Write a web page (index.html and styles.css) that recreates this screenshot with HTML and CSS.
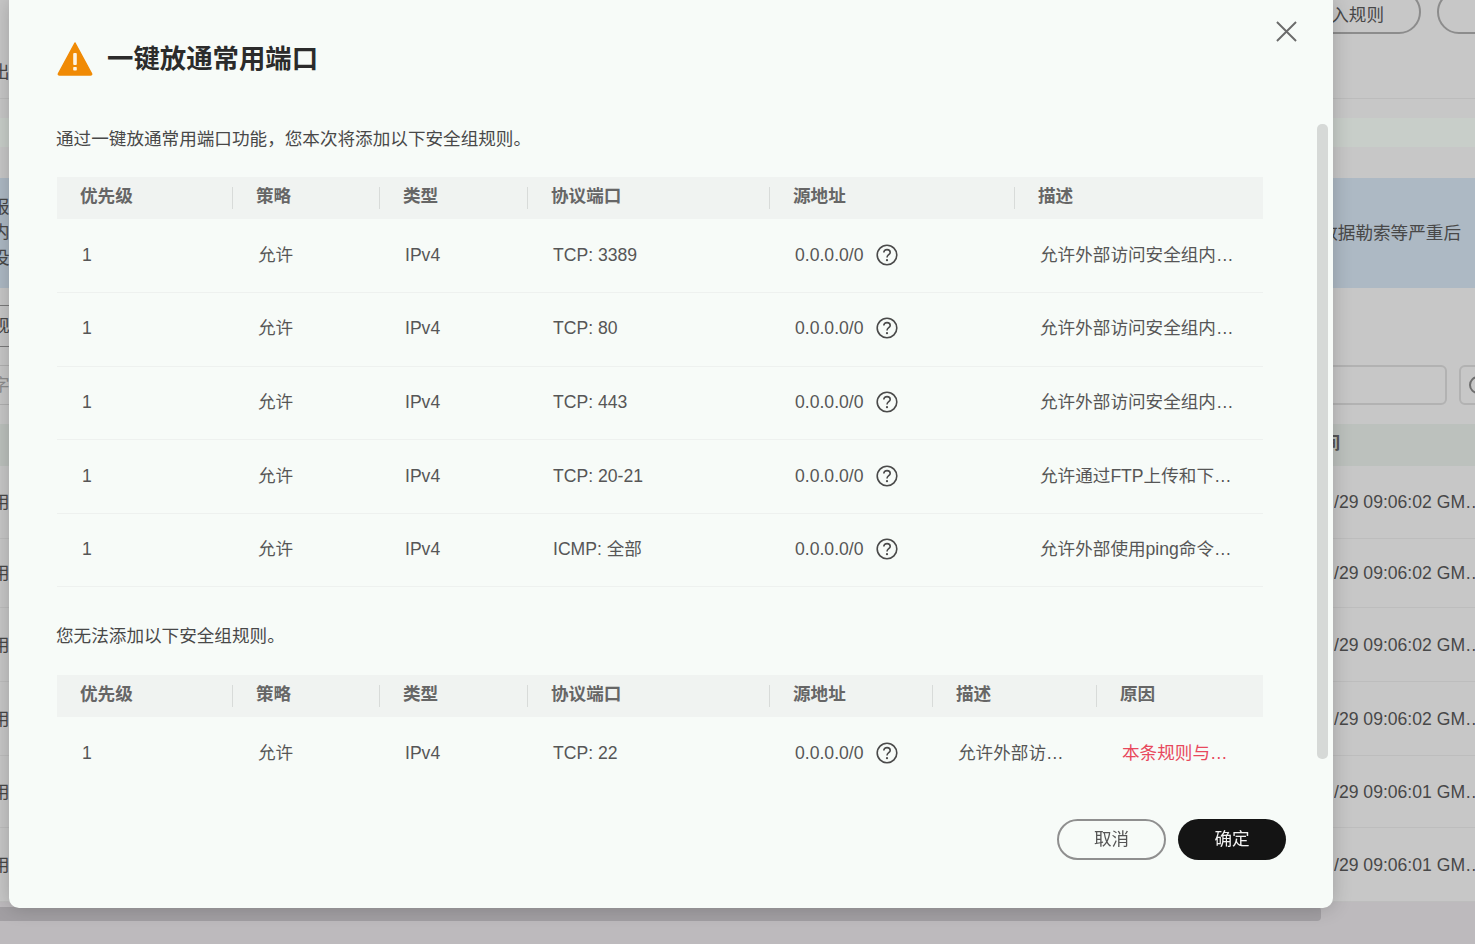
FILE: index.html
```html
<!DOCTYPE html>
<html lang="zh-CN">
<head>
    <meta charset="UTF-8">
    <meta name="viewport" content="width=device-width, initial-scale=1.0">
    <title>一键放通常用端口</title>
    <link rel="stylesheet" href="styles.css">
</head>
<body>
    <!-- Page behind the dialog -->
    <div class="page">
        <div class="toolbar">
            <button class="pill">添加入规则</button>
            <button class="pill pill-next">快速添加</button>
        </div>
        <div class="bg-title"><span class="cut">出</span></div>
        <div class="bg-band"></div>
        <div class="notice">
            <div class="notice-left"><span class="cut">报</span><span class="cut">内</span><span class="cut">没</span></div>
            <div class="notice-right">数据勒索等严重后</div>
        </div>
        <div class="tabs"><span class="tab cut">规</span></div>
        <div class="filters">
            <div class="filter-left"><span class="cut">字</span></div>
            <div class="filter-right">
                <div class="filter-input"></div>
                <div class="filter-btn"><span class="filter-ring"></span></div>
            </div>
        </div>
        <div class="bg-head"><span class="bg-head-text">时间</span></div>
        <div class="bg-row"><span class="cut">用</span><span class="bg-time">/29 09:06:02 GM…</span></div>
        <div class="bg-row"><span class="cut">用</span><span class="bg-time">/29 09:06:02 GM…</span></div>
        <div class="bg-row"><span class="cut">用</span><span class="bg-time">/29 09:06:02 GM…</span></div>
        <div class="bg-row"><span class="cut">用</span><span class="bg-time">/29 09:06:02 GM…</span></div>
        <div class="bg-row"><span class="cut">用</span><span class="bg-time">/29 09:06:01 GM…</span></div>
        <div class="bg-row"><span class="cut">用</span><span class="bg-time">/29 09:06:01 GM…</span></div>
        <div class="hscroll"></div>
    </div>

    <!-- Dialog -->
    <div class="modal">
        <div class="modal-header">
            <svg class="warn-icon" viewBox="0 0 36 34">
                <path d="M18 1 L34.5 31.5 Q35 33 33.5 33 L2.5 33 Q1 33 1.5 31.5 Z" fill="#f08a05" stroke="#f08a05" stroke-width="1.5" stroke-linejoin="round"/>
                <rect x="16.2" y="11" width="3.6" height="12" rx="1" fill="#fdf3e4"/>
                <rect x="16.2" y="25" width="3.6" height="3.6" rx="0.8" fill="#fdf3e4"/>
            </svg>
            <h2>一键放通常用端口</h2>
        </div>
        <button class="close-btn" aria-label="关闭">
            <svg viewBox="0 0 22 22"><path d="M1 1 L21 21 M21 1 L1 21" stroke="#6b6b6b" stroke-width="2" fill="none"/></svg>
        </button>

        <div class="modal-body">
            <p class="intro">通过一键放通常用端口功能，您本次将添加以下安全组规则。</p>
            <table class="rules">
                <colgroup>
                    <col class="c-pri"><col class="c-act"><col class="c-type"><col class="c-port"><col class="c-src"><col class="c-desc">
                </colgroup>
                <thead>
                    <tr><th>优先级</th><th>策略</th><th>类型</th><th>协议端口</th><th>源地址</th><th>描述</th></tr>
                </thead>
                <tbody>
                    <tr>
                        <td>1</td><td>允许</td><td>IPv4</td><td>TCP: 3389</td>
                        <td><span class="src">0.0.0.0/0<svg class="help" viewBox="0 0 22 22"><circle cx="11" cy="11" r="9.8"/><path d="M7.8 8.6 C7.8 6.7 9.2 5.6 11 5.6 C12.9 5.6 14.2 6.8 14.2 8.4 C14.2 10.6 11 10.8 11 13.4"/><circle class="dot" cx="11" cy="16.2" r="1.1"/></svg></span></td>
                        <td>允许外部访问安全组内…</td>
                    </tr>
                    <tr>
                        <td>1</td><td>允许</td><td>IPv4</td><td>TCP: 80</td>
                        <td><span class="src">0.0.0.0/0<svg class="help" viewBox="0 0 22 22"><circle cx="11" cy="11" r="9.8"/><path d="M7.8 8.6 C7.8 6.7 9.2 5.6 11 5.6 C12.9 5.6 14.2 6.8 14.2 8.4 C14.2 10.6 11 10.8 11 13.4"/><circle class="dot" cx="11" cy="16.2" r="1.1"/></svg></span></td>
                        <td>允许外部访问安全组内…</td>
                    </tr>
                    <tr>
                        <td>1</td><td>允许</td><td>IPv4</td><td>TCP: 443</td>
                        <td><span class="src">0.0.0.0/0<svg class="help" viewBox="0 0 22 22"><circle cx="11" cy="11" r="9.8"/><path d="M7.8 8.6 C7.8 6.7 9.2 5.6 11 5.6 C12.9 5.6 14.2 6.8 14.2 8.4 C14.2 10.6 11 10.8 11 13.4"/><circle class="dot" cx="11" cy="16.2" r="1.1"/></svg></span></td>
                        <td>允许外部访问安全组内…</td>
                    </tr>
                    <tr>
                        <td>1</td><td>允许</td><td>IPv4</td><td>TCP: 20-21</td>
                        <td><span class="src">0.0.0.0/0<svg class="help" viewBox="0 0 22 22"><circle cx="11" cy="11" r="9.8"/><path d="M7.8 8.6 C7.8 6.7 9.2 5.6 11 5.6 C12.9 5.6 14.2 6.8 14.2 8.4 C14.2 10.6 11 10.8 11 13.4"/><circle class="dot" cx="11" cy="16.2" r="1.1"/></svg></span></td>
                        <td>允许通过FTP上传和下…</td>
                    </tr>
                    <tr>
                        <td>1</td><td>允许</td><td>IPv4</td><td>ICMP: 全部</td>
                        <td><span class="src">0.0.0.0/0<svg class="help" viewBox="0 0 22 22"><circle cx="11" cy="11" r="9.8"/><path d="M7.8 8.6 C7.8 6.7 9.2 5.6 11 5.6 C12.9 5.6 14.2 6.8 14.2 8.4 C14.2 10.6 11 10.8 11 13.4"/><circle class="dot" cx="11" cy="16.2" r="1.1"/></svg></span></td>
                        <td>允许外部使用ping命令…</td>
                    </tr>
                </tbody>
            </table>

            <p class="intro second">您无法添加以下安全组规则。</p>
            <table class="rules">
                <colgroup>
                    <col class="c-pri"><col class="c-act"><col class="c-type"><col class="c-port"><col class="c-src2"><col class="c-desc2"><col class="c-why">
                </colgroup>
                <thead>
                    <tr><th>优先级</th><th>策略</th><th>类型</th><th>协议端口</th><th>源地址</th><th>描述</th><th>原因</th></tr>
                </thead>
                <tbody>
                    <tr>
                        <td>1</td><td>允许</td><td>IPv4</td><td>TCP: 22</td>
                        <td><span class="src">0.0.0.0/0<svg class="help" viewBox="0 0 22 22"><circle cx="11" cy="11" r="9.8"/><path d="M7.8 8.6 C7.8 6.7 9.2 5.6 11 5.6 C12.9 5.6 14.2 6.8 14.2 8.4 C14.2 10.6 11 10.8 11 13.4"/><circle class="dot" cx="11" cy="16.2" r="1.1"/></svg></span></td>
                        <td>允许外部访…</td>
                        <td class="reason">本条规则与…</td>
                    </tr>
                </tbody>
            </table>
        </div>

        <div class="modal-footer">
            <button class="btn btn-cancel">取消</button>
            <button class="btn btn-ok">确定</button>
        </div>
        <div class="vscroll"></div>
    </div>
</body>
</html>
```

FILE: styles.css
```css
/* General */
html, body {
    margin: 0;
    padding: 0;
    height: 100%;
    overflow: hidden;
}
body {
    font-family: "Liberation Sans", "Noto Sans CJK SC", sans-serif;
    font-size: 17.6px;
    line-height: 24px;
    color: #4f4f4f;
    background-color: #bdbabd;
    filter: blur(0.4px); /* the reference is a soft video frame */
}
button {
    font-family: inherit;
    font-size: inherit;
    line-height: inherit;
    cursor: pointer;
}

/* Page behind the dialog */
.page {
    display: flex;
    flex-direction: column;
    height: 100%;
    overflow: hidden;
    color: #484848;
}
.cut {
    display: block;
    margin-left: -8px;
}
.toolbar {
    height: 34px;
    display: flex;
    justify-content: flex-end;
    align-items: flex-end;
    gap: 16px;
    margin-right: -142px;
    background-color: #c7c7c7;
}
.pill {
    flex: none;
    width: 130px;
    height: 44px;
    border: 2px solid #8c8c8c;
    border-radius: 22px;
    background: none;
    color: #484848;
    padding: 6px 32px 0 0;
    box-sizing: border-box;
    text-align: center;
}
.pill-next {
    width: 180px;
    padding: 6px 0 0 0;
}
.bg-title {
    height: 65px;
    padding-top: 26px;
    box-sizing: border-box;
    background-color: #c7c7c7;
    border-bottom: 1px solid #bcbcbc;
}
.bg-band {
    height: 29px;
    border-top: 19px solid #c7c7c7;
    border-bottom: 31px solid #c7c7c7;
    background-color: #c8cec9;
}
.notice {
    height: 110px;
    display: flex;
    justify-content: space-between;
    align-items: center;
    background-color: #adb9c4;
}
.notice-left {
    line-height: 25.5px;
}
.notice-right {
    padding-right: 14px;
}
.tabs {
    height: 77px;
    padding-top: 17px;
    box-sizing: border-box;
    background-color: #c7c7c7;
}
.tab {
    width: 40px;
    height: 42px;
    line-height: 40px;
    border-top: 1px solid #7a7a7a;
    border-bottom: 1px solid #7a7a7a;
    box-sizing: border-box;
}
.filters {
    height: 59px;
    display: flex;
    justify-content: space-between;
    background-color: #c7c7c7;
}
.filter-left {
    height: 40px;
    width: 40px;
    line-height: 38px;
    color: #8e8e8e;
    border-top: 1px solid #b0b0b0;
    border-bottom: 1px solid #b0b0b0;
    box-sizing: border-box;
}
.filter-right {
    display: flex;
    gap: 12px;
    margin-right: -24px;
}
.filter-input {
    width: 300px;
    height: 40px;
    box-sizing: border-box;
    border: 2px solid #b2b2b2;
    border-radius: 6px;
}
.filter-btn {
    width: 40px;
    height: 40px;
    box-sizing: border-box;
    border: 2px solid #b2b2b2;
    border-radius: 6px;
    padding: 9px 0 0 8px;
}
.filter-ring {
    display: block;
    width: 14px;
    height: 14px;
    border: 2px solid #6e6e6e;
    border-radius: 50%;
}
.bg-head {
    height: 42px;
    line-height: 38px;
    background-color: #bcc1bd;
    padding-left: 1305px;
}
.bg-head-text {
    font-weight: 700;
    color: #555;
}
.bg-row {
    height: 74px;
    display: flex;
    justify-content: space-between;
    align-items: center;
    box-sizing: border-box;
    background-color: #c7c7c7;
    border-bottom: 1px solid #bdbdbd;
}
.bg-row:nth-of-type(8) { height: 73px; }
.bg-row:nth-of-type(9) { height: 69px; }
.bg-row:nth-of-type(12) { height: 72px; }
.bg-time {
    flex: none;
    width: 141px;
    white-space: nowrap;
    overflow: hidden;
}
.hscroll {
    flex: none;
    width: 1321px;
    height: 14px;
    margin-top: 5px;
    background-color: #a29fa3;
    border-radius: 0 4px 4px 0;
}

/* Dialog */
.modal {
    position: fixed;
    left: 9px;
    top: 0;
    width: 1324px;
    height: 908px;
    display: flex;
    flex-direction: column;
    background-color: #f7fbf8;
    border-radius: 0 0 10px 10px;
    box-shadow: 0 0 20px rgba(0, 0, 0, 0.2);
}
.modal-header {
    display: flex;
    align-items: center;
    gap: 14px;
    height: 34px;
    padding: 42px 0 0 48px;
}
.modal-header h2 {
    margin: 0;
    font-size: 26.4px;
    line-height: 34px;
    font-weight: 700;
    color: #2b2b2b;
}
.warn-icon {
    width: 36px;
    height: 34px;
}
.close-btn {
    position: absolute;
    left: 1267px;
    top: 21px;
    width: 21px;
    height: 21px;
    padding: 0;
    border: none;
    background: none;
}
.close-btn svg {
    display: block;
}
.modal-body {
    flex: 1;
    overflow: hidden;
    padding-left: 47px;
}
.intro {
    margin: 51px 0 26px;
    color: #484848;
}
.intro.second {
    margin: 37px 0 27px;
}

/* Rule tables */
.rules {
    table-layout: fixed;
    border-collapse: collapse;
    width: 1206px;
    margin-left: 1px;
}
.c-pri { width: 176px; }
.c-act { width: 147px; }
.c-type { width: 148px; }
.c-port { width: 242px; }
.c-src { width: 245px; }
.c-desc { width: 248px; }
.c-src2 { width: 163px; }
.c-desc2 { width: 164px; }
.c-why { width: 166px; }
.rules th {
    position: relative;
    height: 42px;
    padding: 0 0 4px 23px;
    box-sizing: border-box;
    text-align: left;
    font-weight: 700;
    color: #666;
    background-color: #f0f3f1;
}
.rules th + th::before {
    content: "";
    position: absolute;
    left: -1px;
    top: 10px;
    width: 1px;
    height: 22px;
    background-color: #d8dbd9;
}
.rules td {
    height: 73.6px;
    padding: 0 0 2px 25px;
    box-sizing: border-box;
    white-space: nowrap;
    color: #565656;
    border-bottom: 1px solid #eef1ef;
}
.src {
    display: inline-flex;
    align-items: center;
    gap: 13px;
}
.help {
    width: 22px;
    height: 22px;
    fill: none;
    stroke: #4a4a4a;
    stroke-width: 1.6;
}
.help .dot {
    fill: #4a4a4a;
    stroke: none;
}
.rules td.reason {
    color: #e8485c;
}

/* Footer */
.modal-footer {
    display: flex;
    justify-content: flex-end;
    gap: 12px;
    padding: 29px 47px 48px 0;
}
.btn {
    height: 41px;
    padding: 0 0 2px;
    border-radius: 21px;
    box-sizing: border-box;
}
.btn-cancel {
    width: 109px;
    background: none;
    border: 2px solid #8f8f8f;
    color: #555;
}
.btn-ok {
    width: 108px;
    background-color: #141414;
    border: none;
    color: #f2f2f2;
}
.vscroll {
    position: absolute;
    left: 1308px;
    top: 124px;
    width: 11px;
    height: 635px;
    border-radius: 5px;
    background-color: #d6d9d7;
}
```
